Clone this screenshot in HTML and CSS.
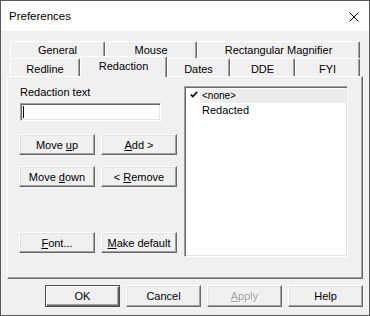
FILE: index.html
```html
<!DOCTYPE html>
<html>
<head>
    <title>Preferences</title>
    <link rel="stylesheet" href="styles.css">
</head>
<body>
    <div class="window">
        <div class="titlebar">
            <span class="title">Preferences</span>
            <svg class="close" width="10" height="10" viewBox="0 0 10 10">
                <path d="M0.5 0.5 L9.5 9.5 M9.5 0.5 L0.5 9.5" stroke="#000" stroke-width="1" fill="none"/>
            </svg>
        </div>
        <div class="content">
            <div class="tabs">
                <div class="tab-row back">
                    <div class="tab" style="width:95px">General</div>
                    <div class="tab" style="width:92px">Mouse</div>
                    <div class="tab" style="width:163px">Rectangular Magnifier</div>
                </div>
                <div class="tab-row front">
                    <div class="tab" style="width:70px">Redline</div>
                    <div class="tab selected" style="width:87px">Redaction</div>
                    <div class="tab" style="width:63px">Dates</div>
                    <div class="tab" style="width:65px">DDE</div>
                    <div class="tab" style="width:65px">FYI</div>
                </div>
            </div>
            <div class="panel">
                <div class="left">
                    <div class="label">Redaction text</div>
                    <div class="field"><span class="caret"></span></div>
                    <div class="btn-grid">
                        <button class="btn">Move <u>u</u>p</button>
                        <button class="btn"><u>A</u>dd &gt;</button>
                        <button class="btn">Move <u>d</u>own</button>
                        <button class="btn">&lt; <u>R</u>emove</button>
                    </div>
                    <div class="btn-grid bottom-grid">
                        <button class="btn"><u>F</u>ont...</button>
                        <button class="btn"><u>M</u>ake default</button>
                    </div>
                </div>
                <div class="listbox">
                    <div class="item current">
                        <span class="check">
                            <svg width="8" height="7" viewBox="0 0 8 7">
                                <path d="M0.8 3.6 L2.8 5.6 L7.2 0.8" stroke="#000" stroke-width="1.6" fill="none"/>
                            </svg>
                        </span>
                        <span class="item-text small">&lt;none&gt;</span>
                    </div>
                    <div class="item">
                        <span class="check"></span>
                        <span class="item-text">Redacted</span>
                    </div>
                </div>
            </div>
            <div class="actions">
                <button class="btn wide default">OK</button>
                <button class="btn wide">Cancel</button>
                <button class="btn wide disabled"><u>A</u>pply</button>
                <button class="btn wide">Help</button>
            </div>
        </div>
    </div>
</body>
</html>
```

FILE: styles.css
```css
html, body {
    margin: 0;
    padding: 0;
}
body {
    font-family: "Liberation Sans", Arial, sans-serif;
    font-size: 11px;
    color: #000;
}
.window {
    width: 370px;
    height: 316px;
    box-sizing: border-box;
    border: 1px solid #585858;
    background-color: #f0f0f0;
    overflow: hidden;
}
.titlebar {
    height: 30px;
    background-color: #fff;
    display: flex;
    align-items: center;
    padding: 0 10px 0 8px;
}
.title {
    font-size: 11.5px;
    flex: 1;
    padding-bottom: 1px;
}
.close {
    margin-top: 2px;
}
.content {
    padding: 10px 0 0 6px;
}

/* tabs */
.tabs {
    margin-left: 3px;
}
.tab-row {
    display: flex;
    align-items: flex-start;
}
.tab-row.back {
    height: 17px;
}
.tab-row.front {
    height: 18px;
}
.tab {
    box-sizing: border-box;
    height: 100%;
    border-top: 1px solid #fff;
    border-left: 1px solid #fff;
    border-right: 1px solid #696969;
    box-shadow: inset -1px 0 #a0a0a0;
    border-radius: 2px 2px 0 0;
    text-align: center;
    background-color: #f0f0f0;
    line-height: 15px;
    padding-top: 1px;
}
.front .tab {
    padding-top: 3px;
}
.tab.selected {
    position: relative;
    z-index: 1;
    height: 21px;
    margin-top: -2px;
    padding-top: 2px;
}

/* panel */
.panel {
    width: 356px;
    height: 203px;
    box-sizing: border-box;
    border-top: 1px solid #fff;
    border-left: 1px solid #fff;
    border-right: 1px solid #696969;
    border-bottom: 1px solid #696969;
    box-shadow: inset -1px -1px #a0a0a0;
    padding: 9px 0 0 11px;
    display: flex;
    gap: 7px;
}
.left {
    width: 158px;
}
.label {
    line-height: 13px;
    padding-left: 1px;
}
.field {
    margin: 4px 0 0 1px;
    width: 141px;
    height: 18px;
    box-sizing: border-box;
    background-color: #fff;
    border: 1px solid;
    border-color: #a0a0a0 #fff #fff #a0a0a0;
    box-shadow: inset 1px 1px #696969, inset -1px -1px #e3e3e3;
    padding: 2px 0 0 2px;
}
.caret {
    display: block;
    width: 1px;
    height: 12px;
    background-color: #000;
}
.btn-grid {
    display: grid;
    grid-template-columns: 76px 76px;
    column-gap: 6px;
    row-gap: 11px;
    margin-top: 13px;
}
.bottom-grid {
    margin-top: 45px;
}
.btn {
    height: 21px;
    box-sizing: border-box;
    font-family: "Liberation Sans", Arial, sans-serif;
    font-size: 11px;
    color: #000;
    background-color: #f0f0f0;
    border: 1px solid;
    border-color: #fff #696969 #696969 #fff;
    box-shadow: inset -1px -1px #a0a0a0, inset 1px 1px #e3e3e3;
    padding: 0;
    text-align: center;
}
.btn.wide {
    width: 75px;
    height: 22px;
}
.btn.default {
    border-color: #4a4a4a;
    box-shadow: inset 1px 1px #fff, inset -1px -1px #696969, inset -2px -2px #a0a0a0;
}
.btn.disabled {
    color: #a0a0a0;
    text-shadow: 1px 1px #fff;
}

/* bottom buttons */
.actions {
    display: flex;
    justify-content: flex-end;
    gap: 6px;
    margin-top: 6px;
    padding-right: 6px;
}

/* listbox */
.listbox {
    width: 164px;
    height: 171px;
    box-sizing: border-box;
    background-color: #fff;
    border: 1px solid;
    border-color: #a0a0a0 #fff #fff #a0a0a0;
    box-shadow: inset 1px 1px #696969, inset -1px -1px #e3e3e3;
    padding: 2px 1px 0 2px;
}
.item {
    display: flex;
    height: 14px;
    align-items: center;
}
.check {
    width: 12px;
    display: flex;
    justify-content: center;
    padding-left: 1px;
    margin-bottom: 3px;
}
.item-text {
    flex: 1;
    height: 14px;
    line-height: 14px;
    padding-left: 2px;
}
.item-text.small {
    font-size: 10px;
}
.current .item-text {
    background-color: #ededed;
}
```
